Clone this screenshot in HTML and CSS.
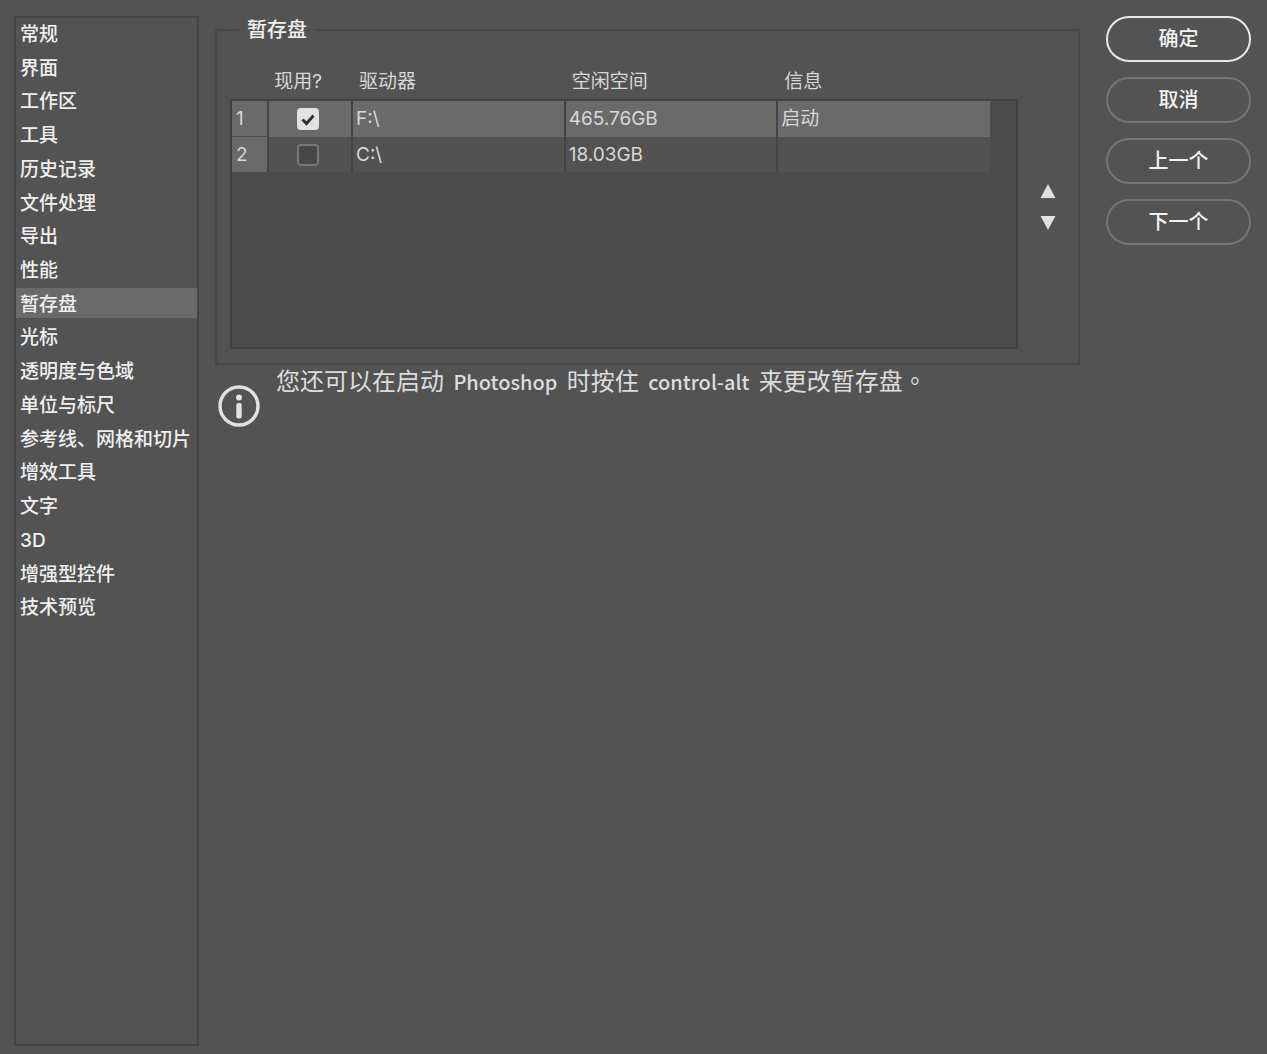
FILE: index.html
```html
<!DOCTYPE html>
<html lang="zh-CN">
<head>
<meta charset="utf-8">
<meta name="viewport" content="width=device-width, initial-scale=1">
<title>首选项</title>
<link rel="stylesheet" href="styles.css">
</head>
<body>
<div class="dialog">
  <nav class="sidebar">
    <ul class="nav-list">
      <li><a class="nav-item" href="#general">常规</a></li>
      <li><a class="nav-item" href="#interface">界面</a></li>
      <li><a class="nav-item" href="#workspace">工作区</a></li>
      <li><a class="nav-item" href="#tools">工具</a></li>
      <li><a class="nav-item" href="#history">历史记录</a></li>
      <li><a class="nav-item" href="#files">文件处理</a></li>
      <li><a class="nav-item" href="#export">导出</a></li>
      <li><a class="nav-item" href="#performance">性能</a></li>
      <li><a class="nav-item selected" href="#scratch" aria-current="page">暂存盘</a></li>
      <li><a class="nav-item" href="#cursors">光标</a></li>
      <li><a class="nav-item" href="#gamut">透明度与色域</a></li>
      <li><a class="nav-item" href="#units">单位与标尺</a></li>
      <li><a class="nav-item" href="#guides">参考线、网格和切片</a></li>
      <li><a class="nav-item" href="#plugins">增效工具</a></li>
      <li><a class="nav-item" href="#type">文字</a></li>
      <li><a class="nav-item" href="#three-d">3D</a></li>
      <li><a class="nav-item" href="#controls">增强型控件</a></li>
      <li><a class="nav-item" href="#previews">技术预览</a></li>
    </ul>
  </nav>

  <main class="content">
    <fieldset class="group">
      <legend>暂存盘</legend>
      <div class="group-body">
        <div class="disks">
          <div class="disks-well"></div>
          <table class="disk-table">
            <colgroup>
              <col class="col-index">
              <col class="col-active">
              <col>
              <col>
              <col>
            </colgroup>
            <thead>
              <tr>
                <td></td>
                <th class="center" scope="col">现用?</th>
                <th scope="col">驱动器</th>
                <th scope="col">空闲空间</th>
                <th scope="col">信息</th>
              </tr>
            </thead>
            <tbody>
              <tr class="current">
                <th scope="row">1</th>
                <td class="center"><input class="check" type="checkbox" aria-label="现用 F:\" checked></td>
                <td>F:\</td>
                <td>465.76GB</td>
                <td>启动</td>
              </tr>
              <tr>
                <th scope="row">2</th>
                <td class="center"><input class="check" type="checkbox" aria-label="现用 C:\"></td>
                <td>C:\</td>
                <td>18.03GB</td>
                <td></td>
              </tr>
            </tbody>
          </table>
        </div>
        <div class="order">
          <button class="order-button" type="button" aria-label="上移"><svg width="16" height="14" viewBox="0 0 16 14"><path d="M8 0 15.500 14H.5z"/></svg></button>
          <button class="order-button" type="button" aria-label="下移"><svg width="16" height="14" viewBox="0 0 16 14"><path d="M.5 0h15L8 14z"/></svg></button>
        </div>
      </div>
    </fieldset>
    <div class="hint">
      <svg class="hint-icon" width="42" height="42" viewBox="0 0 42 42">
        <circle cx="21" cy="21" r="19" fill="none" stroke="#e2e2e2" stroke-width="3.400"/>
        <circle cx="21" cy="12.500" r="3" fill="#e2e2e2"/>
        <rect x="18.300" y="18" width="5.400" height="15.500" rx="2" fill="#e2e2e2"/>
      </svg>
      <p class="hint-text">您还可以在启动 <span class="latin">Photoshop</span> 时按住 <span class="latin">control-alt</span> 来更改暂存盘<span class="stop" lang="zh-TW">。</span></p>
    </div>
  </main>

  <div class="actions">
    <button class="action primary" type="button">确定</button>
    <button class="action" type="button">取消</button>
    <button class="action" type="button">上一个</button>
    <button class="action" type="button">下一个</button>
  </div>
</div>
</body>
</html>
```
FILE: styles.css
```css
* {
  box-sizing: border-box;
}

body {
  margin: 0;
  background: #535353;
  color: #e6e6e6;
  font-family: Inter, "Noto Sans CJK SC", sans-serif;
  font-size: 19px;
}

.dialog {
  display: flex;
  min-height: 100vh;
  padding: 16px 16px 8px 14px;
}

/* Category list */
.sidebar {
  flex: none;
  width: 185px;
  margin-right: 16px;
  border: 2px solid #454545;
}

.nav-list {
  display: grid;
  grid-auto-rows: 1fr;
  height: 607px;
  margin: 0;
  padding: 0;
  list-style: none;
}

.nav-item {
  display: block;
  height: 30px;
  padding-left: 4px;
  color: #efefef;
  font-weight: 500;
  line-height: 34px;
  text-decoration: none;
  white-space: nowrap;
}

.nav-item.selected {
  background: #6a6a6a;
}

/* Scratch disk group */
.content {
  flex: 1;
  min-width: 0;
}

.group {
  min-width: 0;
  margin: 0;
  padding: 0 0 14px 13px;
  border: 2px solid #484848;
}

.group legend {
  margin-left: 9px;
  padding: 0 8px;
  color: #f0f0f0;
  font-size: 20px;
  font-weight: 500;
  line-height: 28px;
}

.group-body {
  display: flex;
}

.disks {
  display: grid;
  flex: 1;
  grid-template-rows: 55px 250px;
}

.disks-well {
  grid-area: 2 / 1;
  border: 2px solid #414141;
  background: #4c4c4c;
}

.disk-table {
  grid-area: 1 / 1 / 3 / 2;
  align-self: start;
  width: calc(100% - 30px);
  margin-left: 2px;
  border-collapse: collapse;
  table-layout: fixed;
  color: #d8d8d8;
}

.col-index {
  width: 36px;
}

.col-active {
  width: 84px;
}

.disk-table th,
.disk-table td {
  padding: 0 3px;
  font-weight: 400;
  line-height: 35px;
  text-align: left;
  vertical-align: top;
}

.disk-table thead th {
  height: 57px;
  padding: 20px 7px 0;
}

.disk-table .center,
.disk-table thead .center {
  padding-right: 4px;
  padding-left: 0;
  text-align: center;
}

.disk-table thead .center {
  padding-right: 24px;
  white-space: nowrap;
}

.disk-table tbody th,
.disk-table tbody td {
  height: 35px;
  background: #525252;
}

.disk-table tbody td {
  border-left: 2px solid #444444;
}

.disk-table tbody .current td {
  background: #6a6a6a;
}

.disk-table tbody th {
  padding-left: 4px;
  background: #696969;
}

.disk-table tbody tr + tr th {
  border-top: 1px solid #4c4c4c;
}

.check {
  width: 22px;
  height: 22px;
  margin: 7px 0 0;
  border: 2px solid #777777;
  border-radius: 4px;
  background: #484848;
  appearance: none;
  vertical-align: top;
}

.check:checked {
  border-color: #e2e2e2;
  background: #e2e2e2 url("data:image/svg+xml,%3Csvg xmlns='http://www.w3.org/2000/svg' viewBox='0 0 18 18'%3E%3Cpath d='M3.500 9.500l4 4L14.500 5.500' fill='none' stroke='%23333' stroke-width='3'/%3E%3C/svg%3E") center / 18px no-repeat;
}

.order {
  display: flex;
  flex: none;
  flex-direction: column;
  gap: 18px;
  align-items: center;
  width: 60px;
  padding-top: 140px;
}

.order-button {
  display: block;
  padding: 0;
  border: 0;
  background: none;
  line-height: 0;
}

.order-button path {
  fill: #e0e0e0;
}

/* Hint below the group */
.hint {
  display: flex;
  gap: 16px;
  padding-left: 3px;
}

.hint-icon {
  flex: none;
  margin-top: 20px;
}

.hint-text {
  margin: 0;
  color: #dcdcdc;
  font-family: "Noto Sans CJK SC", sans-serif;
  font-size: 24px;
  font-weight: 400;
  line-height: 30px;
}

.latin {
  margin: 0 4px;
  font-size: 20px;
  font-weight: 500;
}

.stop {
  font-family: "Noto Sans CJK TC", sans-serif;
}

/* Dialog buttons */
.actions {
  display: flex;
  flex: none;
  flex-direction: column;
  gap: 15px;
  width: 145px;
  margin-left: 26px;
}

.action {
  height: 46px;
  padding: 0 0 4px;
  border: 2px solid #757575;
  border-radius: 23px;
  background: transparent;
  color: #f2f2f2;
  font-family: inherit;
  font-size: 20px;
  font-weight: 500;
}

.action.primary {
  border-color: #e8e8e8;
}
```
